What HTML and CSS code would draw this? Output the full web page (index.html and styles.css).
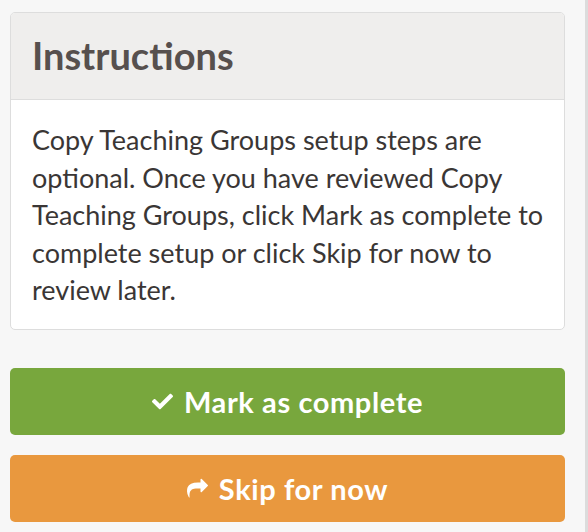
FILE: index.html
```html
<!DOCTYPE html>
<html lang="en">
<head>
<meta charset="utf-8">
<title>Instructions</title>
<link rel="stylesheet" href="styles.css">
</head>
<body>
<div class="page">
  <section class="panel">
    <header class="panel-head">
      <h2 class="panel-title">Instructions</h2>
    </header>
    <div class="panel-body">
      <p>Copy Teaching Groups setup steps are optional. Once you have reviewed Copy Teaching Groups, click Mark as complete to complete setup or click Skip for now to review later.</p>
    </div>
  </section>
  <div class="actions">
    <button class="btn btn-complete" type="button">
      <svg class="icon icon-check" viewBox="0 0 512 512" aria-hidden="true"><path d="M173.898 439.404l-166.4-166.4c-9.997-9.997-9.997-26.206 0-36.204l36.203-36.204c9.997-9.998 26.207-9.998 36.204 0L192 312.69 432.095 72.596c9.997-9.997 26.207-9.997 36.204 0l36.203 36.204c9.997 9.997 9.997 26.206 0 36.204l-294.4 294.401c-9.998 9.997-26.207 9.997-36.204-.001z"/></svg>
      <span>Mark as complete</span>
    </button>
    <button class="btn btn-skip" type="button">
      <svg class="icon icon-share" viewBox="0 0 1792 1792" aria-hidden="true"><path d="M1792 640q0 26-19 45l-512 512q-19 19-45 19t-45-19-19-45v-256h-224q-98 0-175.5 6t-154 21.5-133 42.5-105.5 69.5-80 101-48.5 138.5-17.5 181q0 55 5 123 0 6 2.5 23.5t2.5 26.5q0 15-8.5 25t-23.5 10q-16 0-28-17-7-9-13-22t-13.5-30-10.5-24q-127-285-127-451 0-199 53-333 162-403 875-403h224v-256q0-26 19-45t45-19 45 19l512 512q19 19 19 45z"/></svg>
      <span>Skip for now</span>
    </button>
  </div>
</div>
</body>
</html>
```

FILE: styles.css
```css
* { box-sizing: border-box; }
html, body { margin: 0; padding: 0; }
body {
  background: #f7f7f7;
  font-family: Lato, "Noto Sans", sans-serif;
  color: #3a3635;
}
.page {
  height: 532px;
  padding: 12px 20px 0 10px;
  border-right: 3px solid #dcdcdc;
}
.panel {
  background: #fff;
  border: 1px solid #dddddd;
  border-radius: 5px;
  overflow: hidden;
}
.panel-head {
  background: #efeeed;
  border-bottom: 1px solid #dddddd;
  height: 87px;
  padding: 20px 21px 0;
}
.panel-title {
  margin: 0;
  font-size: 38px;
  line-height: 44px;
  font-weight: 700;
  color: #57504e;
}
.panel-body {
  padding: 21px 10px 20px 21px;
}
.panel-body p {
  margin: 0;
  font-size: 27px;
  line-height: 37.5px;
}
.actions {
  margin-top: 38px;
  display: flex;
  flex-direction: column;
  gap: 20px;
}
.btn {
  height: 67px;
  border: 0;
  border-radius: 5px;
  color: #fff;
  font-family: inherit;
  font-size: 29px;
  letter-spacing: 0.6px;
  font-weight: 700;
  display: flex;
  align-items: center;
  justify-content: center;
  gap: 11px;
  padding: 0;
}
.btn-complete { background: #78a73d; }
.btn-skip { background: #e9983e; }
.icon { fill: #fff; flex: none; }
.icon-check { width: 21px; height: 21px; }
.icon-share { width: 21px; height: 21px; }
```
